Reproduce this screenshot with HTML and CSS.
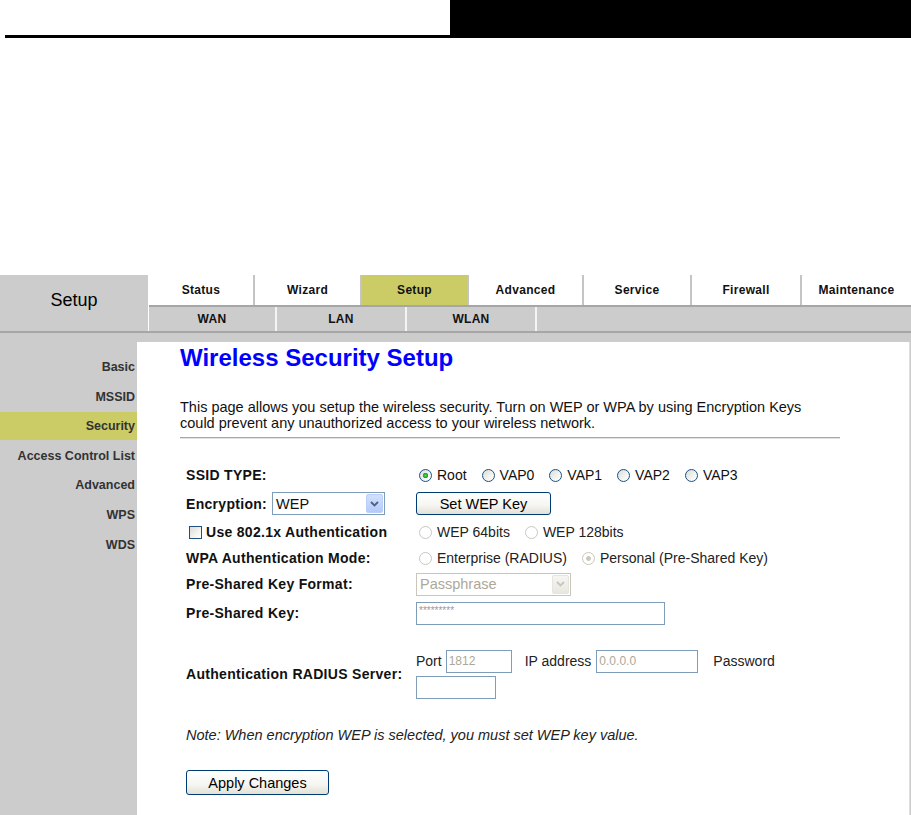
FILE: index.html
```html
<!DOCTYPE html>
<html>
<head>
<meta charset="utf-8">
<title>Wireless Security Setup</title>
<link rel="stylesheet" href="styles.css">
</head>
<body>
<div class="doc-header">
  <div class="doc-header-left"></div>
  <div class="doc-header-right"></div>
</div>

<div class="router">
  <div class="topbar">
    <div class="brand">Setup</div>
    <div class="navs">
      <div class="tabs">
        <div class="tab t-status">Status</div>
        <div class="tab t-wizard">Wizard</div>
        <div class="tab t-setup active">Setup</div>
        <div class="tab t-advanced">Advanced</div>
        <div class="tab t-service">Service</div>
        <div class="tab t-firewall">Firewall</div>
        <div class="tab t-maint">Maintenance</div>
      </div>
      <div class="subtabs">
        <div class="subtab">WAN</div>
        <div class="subtab">LAN</div>
        <div class="subtab">WLAN</div>
      </div>
    </div>
  </div>

  <div class="main">
    <div class="sidebar">
      <div class="side-item">Basic</div>
      <div class="side-item">MSSID</div>
      <div class="side-item active">Security</div>
      <div class="side-item">Access Control List</div>
      <div class="side-item">Advanced</div>
      <div class="side-item">WPS</div>
      <div class="side-item">WDS</div>
    </div>

    <div class="content">
      <h1 class="title">Wireless Security Setup</h1>
      <p class="desc">This page allows you setup the wireless security. Turn on WEP or WPA by using Encryption Keys<br>could prevent any unauthorized access to your wireless network.</p>
      <div class="rule"></div>

      <div class="form">
        <div class="row r1">
          <div class="lbl">SSID TYPE:</div>
          <div class="val opts">
            <label class="opt"><input type="radio" name="ssid" checked>Root</label>
            <label class="opt"><input type="radio" name="ssid">VAP0</label>
            <label class="opt"><input type="radio" name="ssid">VAP1</label>
            <label class="opt"><input type="radio" name="ssid">VAP2</label>
            <label class="opt"><input type="radio" name="ssid">VAP3</label>
          </div>
        </div>

        <div class="row r2">
          <div class="lbl">Encryption:
            <div class="select enc">
              <span class="select-val">WEP</span>
              <span class="select-btn"><svg width="9" height="6" viewBox="0 0 9 6"><path d="M1 1 L4.5 4.5 L8 1" fill="none" stroke="#4d6185" stroke-width="1.8"/></svg></span>
            </div>
          </div>
          <div class="val"><button class="btn wep-btn">Set WEP Key</button></div>
        </div>

        <div class="row r3">
          <div class="lbl"><label class="chk"><input type="checkbox">Use 802.1x Authentication</label></div>
          <div class="val opts">
            <label class="opt off"><input type="radio" name="wep" disabled>WEP 64bits</label>
            <label class="opt off"><input type="radio" name="wep" disabled>WEP 128bits</label>
          </div>
        </div>

        <div class="row r4">
          <div class="lbl">WPA Authentication Mode:</div>
          <div class="val opts">
            <label class="opt off"><input type="radio" name="wpa" disabled>Enterprise (RADIUS)</label>
            <label class="opt off"><input type="radio" name="wpa" disabled checked>Personal (Pre-Shared Key)</label>
          </div>
        </div>

        <div class="row r5">
          <div class="lbl">Pre-Shared Key Format:</div>
          <div class="val">
            <div class="select psk-fmt disabled">
              <span class="select-val">Passphrase</span>
              <span class="select-btn"><svg width="9" height="6" viewBox="0 0 9 6"><path d="M1 1 L4.5 4.5 L8 1" fill="none" stroke="#c9c7ba" stroke-width="1.8"/></svg></span>
            </div>
          </div>
        </div>

        <div class="row r6">
          <div class="lbl">Pre-Shared Key:</div>
          <div class="val"><input class="field psk" type="text" value="*********"></div>
        </div>

        <div class="row r7">
          <div class="lbl">Authentication RADIUS Server:</div>
          <div class="val radius">
            <div class="radius-line">
              <span>Port</span>
              <input class="field port" type="text" value="1812" disabled>
              <span class="ip-lbl">IP address</span>
              <input class="field ip" type="text" value="0.0.0.0" disabled>
              <span class="pw-lbl">Password</span>
            </div>
            <input class="field pw" type="password">
          </div>
        </div>
      </div>

      <p class="note">Note: When encryption WEP is selected, you must set WEP key value.</p>
      <button class="btn apply">Apply Changes</button>
    </div>
  </div>
</div>
</body>
</html>
```

FILE: styles.css
```css
html, body {
  margin: 0;
  padding: 0;
}
body {
  width: 911px;
  height: 815px;
  overflow: hidden;
  background: #fff;
  font-family: "Liberation Sans", Arial, sans-serif;
  color: #000;
}

/* document header */
.doc-header {
  display: flex;
  height: 38px;
}
.doc-header-left {
  width: 445px;
  margin-left: 5px;
  border-bottom: 3px solid #000;
  box-sizing: border-box;
}
.doc-header-right {
  flex: 1;
  background: #000;
}

/* router ui */
.router {
  margin-top: 237px;
  background: #ccc;
  height: 540px;
}
.topbar {
  display: flex;
  height: 56px;
  border-bottom: 2px solid #a6a6a6;
  background: #fff;
}
.brand {
  width: 148px;
  margin-right: 1px;
  background: #ccc;
  font-size: 18px;
  display: flex;
  align-items: center;
  justify-content: center;
  padding-bottom: 5px;
  box-sizing: border-box;
}
.navs {
  flex: 1;
  display: flex;
  flex-direction: column;
}
.tabs {
  display: flex;
  height: 30px;
  background: #fff;
  border-bottom: 2px solid #a6a6a6;
}
.tab {
  box-sizing: border-box;
  display: flex;
  align-items: center;
  justify-content: center;
  font-size: 12px;
  font-weight: bold;
  letter-spacing: 0.3px;
  color: #111;
  border-left: 2px solid #c4c4c4;
}
.t-status { width: 104px; border-left: none; }
.t-wizard { width: 107px; }
.t-setup { width: 107px; }
.t-advanced { width: 115px; }
.t-service { width: 108px; }
.t-firewall { width: 110px; }
.t-maint { flex: 1; }
.tab.active {
  background: #cccc66;
}
.subtabs {
  flex: 1;
  display: flex;
  background: #ccc;
}
.subtab {
  width: 128px;
  border-right: 2px solid #f4f4f4;
  display: flex;
  align-items: center;
  justify-content: center;
  font-size: 12px;
  font-weight: bold;
  letter-spacing: 0.3px;
  color: #111;
}
.subtab:first-child {
  width: 126px;
}

.main {
  display: flex;
  height: 482px;
}
.sidebar {
  width: 137px;
  padding-top: 20px;
  display: flex;
  flex-direction: column;
  gap: 1.6px;
}
.side-item {
  height: 28px;
  display: flex;
  align-items: center;
  justify-content: flex-end;
  padding-right: 2px;
  font-size: 12.5px;
  font-weight: bold;
  color: #333;
}
.side-item.active {
  background: #cccc66;
}

.content {
  flex: 1;
  margin-top: 9px;
  margin-right: 1px;
  background: #fff;
  border-right: 1px solid #dedede;
  padding-left: 43px;
}
.title {
  margin: 2px 0 0;
  font-size: 24px;
  line-height: 28px;
  font-weight: bold;
  color: #0000ff;
}
.desc {
  margin: 27px 0 0;
  font-size: 14.5px;
  line-height: 16px;
  width: 680px;
  color: #111;
}
.rule {
  width: 660px;
  height: 1px;
  margin-top: 6px;
  background: #a8a8a8;
  border-bottom: 1px solid #e2e2e2;
}

.form {
  margin-top: 22px;
  width: 680px;
  display: flex;
  flex-direction: column;
}
.row {
  display: flex;
  align-items: center;
}
.r1 { height: 28px; }
.r2 { height: 29px; }
.r3 { height: 28px; }
.r4 { height: 24px; }
.r5 { height: 28px; }
.r6 { height: 30px; }
.r7 { height: 92px; }

.lbl {
  width: 236px;
  padding-left: 6px;
  box-sizing: border-box;
  display: flex;
  align-items: center;
  font-size: 14px;
  font-weight: bold;
  letter-spacing: 0.3px;
  color: #111;
  white-space: nowrap;
}
.val {
  display: flex;
  align-items: center;
  font-size: 14px;
}
.opts {
  gap: 15px;
  padding-left: 3px;
}
.opt {
  display: flex;
  align-items: center;
  gap: 5px;
  color: #111;
}
.opt.off {
  color: #222;
}

input[type="radio"] {
  -webkit-appearance: none;
  appearance: none;
  margin: 0;
  width: 13px;
  height: 13px;
  border-radius: 50%;
  border: 1px solid #1c5180;
  box-sizing: border-box;
  background: linear-gradient(135deg, #dcdcd5 0%, #f4f4f0 60%, #fff 100%);
}
input[type="radio"]:checked {
  background: radial-gradient(circle, #55d755 0, #21a121 2.4px, rgba(33,161,33,0) 3px),
              linear-gradient(135deg, #dcdcd5 0%, #f4f4f0 60%, #fff 100%);
}
input[type="radio"]:disabled {
  border-color: #cac8bb;
  background: #fff;
}
input[type="radio"]:disabled:checked {
  background: radial-gradient(circle, #cac8bb 0, #cac8bb 2px, rgba(202,200,187,0) 2.8px), #fff;
}

.chk {
  display: flex;
  align-items: center;
  gap: 4px;
  padding-left: 3px;
}
input[type="checkbox"] {
  -webkit-appearance: none;
  appearance: none;
  margin: 0;
  width: 13px;
  height: 13px;
  border: 1px solid #1c5180;
  box-sizing: border-box;
  background: linear-gradient(135deg, #dcdcd5 0%, #f4f4f0 60%, #fff 100%);
}

.select {
  display: flex;
  align-items: center;
  height: 23px;
  box-sizing: border-box;
  border: 1px solid #7f9db9;
  background: #fff;
  font-weight: normal;
  letter-spacing: 0;
}
.select.enc {
  width: 113px;
  margin-left: 5px;
}
.select.psk-fmt {
  width: 155px;
  border-color: #c9c7ba;
  color: #aca899;
}
.select-val {
  flex: 1;
  padding-left: 3px;
  font-size: 14.5px;
}
.select-btn {
  width: 17px;
  height: 19px;
  margin-right: 1px;
  box-sizing: border-box;
  border: 1px solid #bccefa;
  border-radius: 2px;
  background: linear-gradient(#d2e0fd, #b4cbf9);
  display: flex;
  align-items: center;
  justify-content: center;
}
.select.disabled .select-btn {
  border-color: #e6e5de;
  background: linear-gradient(#f6f6f2, #e8e7df);
}

.btn {
  font-family: "Liberation Sans", Arial, sans-serif;
  font-size: 14.5px;
  color: #000;
  border: 1px solid #003c74;
  border-radius: 3px;
  background: linear-gradient(#ffffff 0%, #f5f5f1 60%, #e3e0d5 100%);
  box-sizing: border-box;
  padding: 0;
}
.wep-btn {
  width: 135px;
  height: 23px;
}
.apply {
  width: 143px;
  height: 25px;
  margin-top: 27px;
  margin-left: 6px;
}

.field {
  height: 23px;
  box-sizing: border-box;
  border: 1px solid #7f9db9;
  background: #fff;
  padding: 0 2px;
  font-family: "Liberation Sans", Arial, sans-serif;
  font-size: 12px;
  color: #aca899;
  outline: none;
}
.field:disabled {
  color: #aca899;
  background: #fff;
}
.psk {
  width: 249px;
  font-size: 10px;
  color: #9a9a9a;
  padding-bottom: 6px;
}
.radius {
  flex-direction: column;
  align-items: flex-start;
  gap: 3px;
}
.radius-line {
  display: flex;
  align-items: center;
  color: #222;
}
.port {
  width: 66px;
  margin-left: 4px;
}
.ip-lbl {
  margin-left: 13px;
}
.ip {
  width: 102px;
  margin-left: 5px;
}
.pw-lbl {
  margin-left: 15px;
}
.pw {
  width: 80px;
}

.note {
  margin: 7px 0 0 6px;
  font-size: 14.5px;
  line-height: 16px;
  font-style: italic;
  color: #222;
}
```
